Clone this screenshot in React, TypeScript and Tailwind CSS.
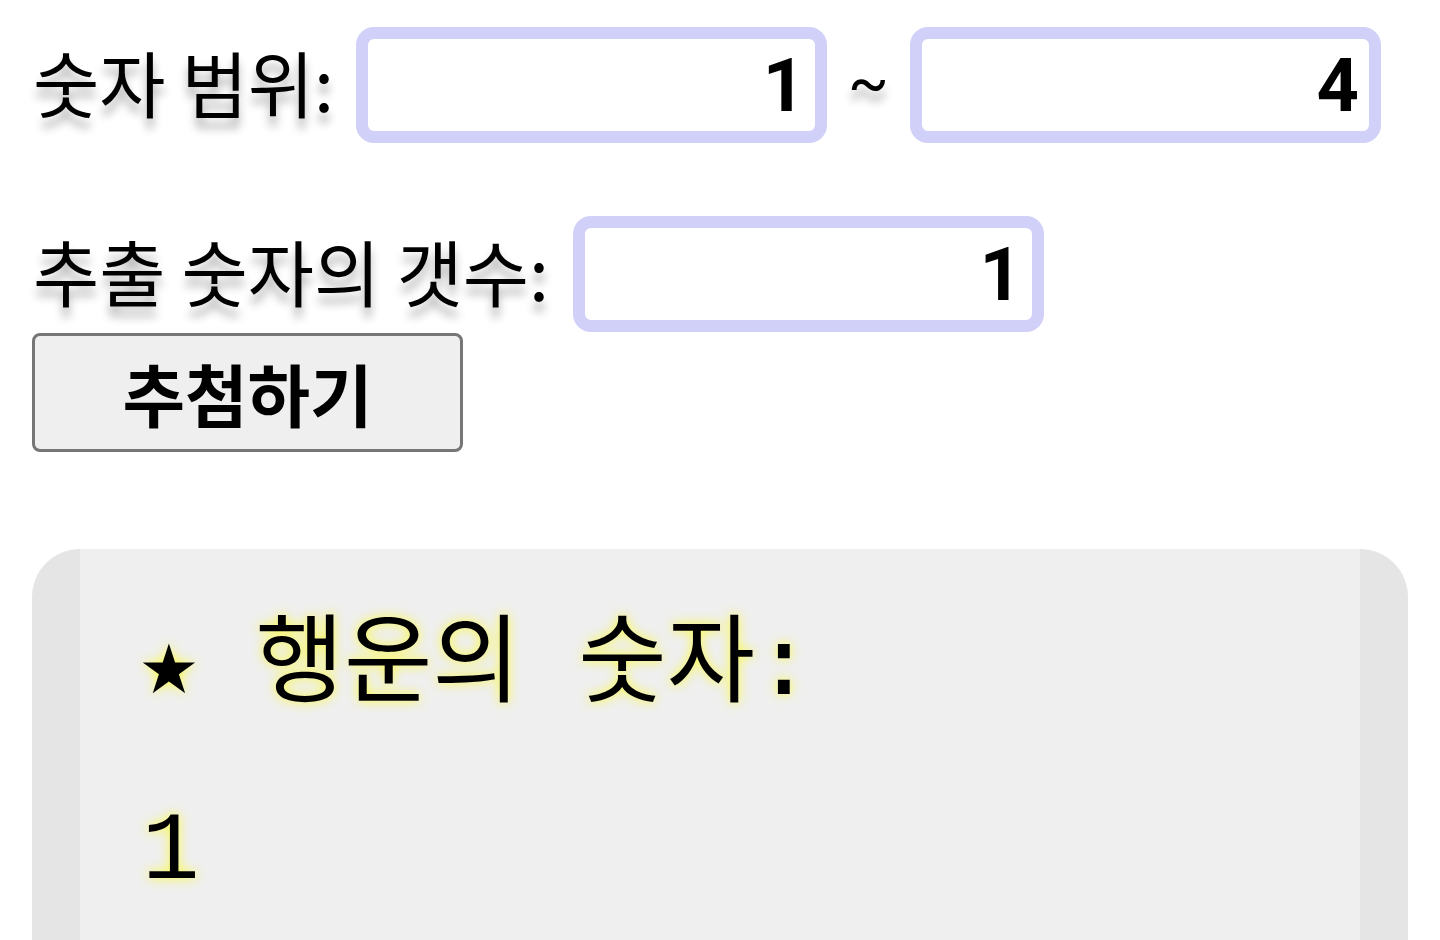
import { useState } from "react";

const LABEL_FONT = "font-['Noto_Sans_CJK_KR',sans-serif]";

function NumberBox({ value, onChange }: { value: string; onChange: (v: string) => void }) {
  return (
    <input
      type="text"
      value={value}
      onChange={(e) => onChange(e.target.value)}
      className="h-[116px] w-[471px] shrink-0 rounded-[18px] border-[12px] border-[#d0d0f8] bg-white px-[10px] text-right font-['Roboto',sans-serif] text-[74px] font-bold text-black outline-none"
    />
  );
}

export default function App() {
  const [min, setMin] = useState("1");
  const [max, setMax] = useState("4");
  const [count, setCount] = useState("1");
  const [result] = useState("1");

  return (
    <div className="min-h-[940px] overflow-hidden bg-white px-[32px] pt-[27px] text-black">
      {/* range row */}
      <div className="flex items-center">
        <span className={`${LABEL_FONT} mr-[22px] mb-[8px] ml-[1px] text-[72px] leading-none [text-shadow:0_10px_10px_rgba(0,0,0,0.3)]`}>
          숫자 범위:
        </span>
        <NumberBox value={min} onChange={setMin} />
        <span className="mx-[21px] mb-[4px] font-['Roboto',sans-serif] text-[60px] leading-none [text-shadow:0_10px_10px_rgba(0,0,0,0.3)]">
          ~
        </span>
        <NumberBox value={max} onChange={setMax} />
      </div>

      {/* count row */}
      <div className="mt-[73px] flex items-center">
        <span className={`${LABEL_FONT} mr-[24px] mb-[8px] ml-[1px] text-[72px] leading-none [text-shadow:0_10px_10px_rgba(0,0,0,0.3)]`}>
          추출 숫자의 갯수:
        </span>
        <NumberBox value={count} onChange={setCount} />
      </div>

      <button className="mt-px flex h-[119px] w-[431px] items-center justify-center rounded-[8px] border-[3px] border-[#767676] bg-[#efefef] font-['Noto_Sans_CJK_KR',sans-serif] text-[68px] font-bold leading-none">
        추첨하기
      </button>

      {/* result */}
      <div className="mt-[97px] h-[400px] rounded-t-[48px] border-x-[48px] border-[#e5e5e5] bg-[#efefef] pr-[60px] pl-[56px] pt-[16px] font-['DejaVu_Sans_Mono','Noto_Sans_CJK_KR',monospace] text-[96px] leading-[2] [text-shadow:0_0_12px_rgba(255,255,0,0.75)]">
        <p>
          <span className="ml-[4px]">★</span> 행운의 숫자:
        </p>
        <p className="pl-[6px] font-['Liberation_Mono',monospace]">{result}</p>
      </div>
    </div>
  );
}
